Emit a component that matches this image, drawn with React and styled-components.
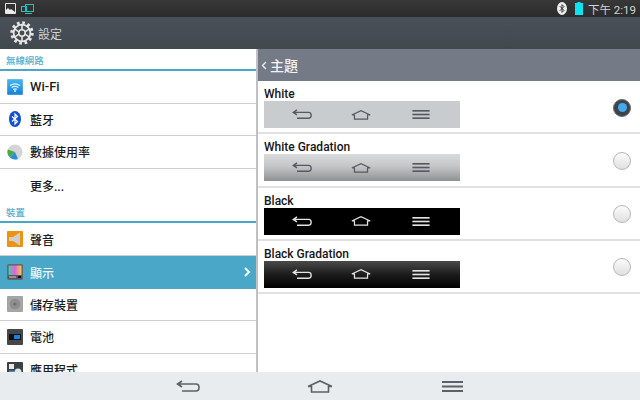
import React from 'react';
import styled, { createGlobalStyle } from 'styled-components';

const GlobalStyle = createGlobalStyle`
  html, body { margin: 0; padding: 0; background: #fff; }
  body { font-family: "Roboto", "Noto Sans CJK TC", sans-serif; }
`;

const Screen = styled.div`
  width: 640px;
  height: 400px;
  display: flex;
  flex-direction: column;
  overflow: hidden;
`;

const StatusBar = styled.div`
  height: 17px;
  flex: none;
  display: flex;
  align-items: center;
  padding: 0 4px 0 5px;
  background: linear-gradient(#383838, #2b2b2b);
`;

const StatusLeft = styled.div`
  display: flex;
  align-items: center;
  gap: 5px;
`;

const StatusRight = styled.div`
  margin-left: auto;
  display: flex;
  align-items: center;
`;

const Clock = styled.span`
  margin-left: 5px;
  font: 11.5px "Roboto", "Noto Sans CJK TC", sans-serif;
  color: #d4d4d4;
  white-space: nowrap;
`;

const TitleBar = styled.div`
  height: 32px;
  flex: none;
  display: flex;
  align-items: center;
  padding-left: 10px;
  gap: 4px;
  background: linear-gradient(#4a5057, #41484e);
`;

const TitleText = styled.span`
  font: 12px "Noto Sans CJK TC", sans-serif;
  color: #d2d4d6;
`;

const Main = styled.div`
  flex: 1;
  min-height: 0;
  display: grid;
  grid-template-columns: 256px 2px 1fr;
`;

const LeftPane = styled.div`
  overflow: hidden;
  background: #fff;
`;

const PaneDivider = styled.div`
  background: linear-gradient(90deg, #c4c5c7, #b9babc);
`;

const SectionHeader = styled.div`
  height: 22px;
  box-sizing: border-box;
  padding: 4.5px 0 0 6px;
  border-bottom: 2px solid #4ba6c8;
  font: 500 9.4px/13px "Noto Sans CJK TC", sans-serif;
  color: #55aecd;
  background: #fff;
`;

const MenuRow = styled.div`
  height: 32.6px;
  box-sizing: border-box;
  display: flex;
  align-items: center;
  padding: 0 5px 0 7px;
  border-bottom: ${p => (p.$active || p.$plain ? '0' : '1px solid #cfcfcf')};
  background: ${p => (p.$active ? '#4aa7c7' : '#fff')};
  color: ${p => (p.$active ? '#eef8fb' : '#1c1c1c')};
  font: 500 12px "Roboto", "Noto Sans CJK TC", sans-serif;
`;

const LatinLabel = styled.span`
  font-size: 13px;
`;

const IconSlot = styled.span`
  width: 16px;
  height: 16px;
  margin-right: 7px;
  flex: none;
  display: block;
  svg { display: block; }
`;

const Chevron = styled.svg`
  margin-left: auto;
  display: block;
`;

const RightPane = styled.div`
  overflow: hidden;
  background: #fff;
`;

const SubHeader = styled.div`
  height: 32px;
  display: flex;
  align-items: center;
  gap: 3px;
  padding-left: 3px;
  background: #747a86;
  color: #f0f1f3;
  font: 500 14px "Noto Sans CJK TC", sans-serif;
`;

const ThemeRow = styled.div`
  height: 53.3px;
  box-sizing: border-box;
  display: flex;
  align-items: flex-start;
  padding: 6px 0 0 6px;
  border-bottom: 2px solid #e0e0e0;
`;

const ThemeBody = styled.div`
  width: 196px;
`;

const ThemeName = styled.div`
  font: 500 12px/14px "Roboto", sans-serif;
  color: #161616;
`;

const PreviewBar = styled.div`
  height: 27px;
  display: grid;
  grid-template-columns: 1fr 1fr 1fr;
  padding: 0 9px 0 8px;
  align-items: center;
  justify-items: center;
  background: ${p => p.$bg};
`;

const Radio = styled.span`
  margin: 11.5px 9px 0 auto;
  width: 18px;
  height: 18px;
  flex: none;
  border-radius: 50%;
  box-sizing: border-box;
  display: flex;
  align-items: center;
  justify-content: center;
  background: ${p => (p.$on ? '#3d444c' : 'linear-gradient(#fbfbfb, #dfe0e2)')};
  border: ${p => (p.$on ? '1px solid #666c72' : '1px solid #b5b6b8')};
`;

const RadioDot = styled.span`
  width: 9px;
  height: 9px;
  border-radius: 50%;
  background: #45a9ee;
`;

const BottomBar = styled.div`
  height: 28px;
  flex: none;
  display: grid;
  grid-template-columns: repeat(3, 132px);
  justify-content: center;
  align-items: center;
  justify-items: center;
  background: #e9ecef;
`;

const BtGlyph = styled.svg`
  display: block;
  margin-right: 8px;
`;

const BackIcon = ({ color, w = 24, h = 13, sw = 1.6 }) => (
  <svg width={w} height={h} viewBox="0 0 24 13" fill="none" stroke={color} strokeWidth={sw}>
    <path d="M6 1 1.5 4 6 7M1.5 4H20q3 0 3 3.5t-3 3.5H6" />
  </svg>
);

const HomeIcon = ({ color, w = 26, h = 13, sw = 1.6 }) => (
  <svg width={w} height={h} viewBox="0 0 26 13" fill="none" stroke={color} strokeWidth={sw}>
    <path d="M1 6.5 13 1l12 5.5M1 6.5h3.5V12h17V6.5H25" />
  </svg>
);

const LinesIcon = ({ color, w = 21, h = 11 }) => (
  <svg width={w} height={h} viewBox="0 0 21 11" fill={color}>
    <rect y="0" width="21" height="2" />
    <rect y="4.5" width="21" height="2" />
    <rect y="9" width="21" height="2" />
  </svg>
);

const GearIcon = () => (
  <svg width="24" height="24" viewBox="0 0 24 24" fill="none" stroke="#e6e6e6">
    <circle cx="12" cy="12" r="10" strokeWidth="3.4" strokeDasharray="2.6 2.63" />
    <circle cx="12" cy="12" r="8.4" strokeWidth="1.8" />
    <circle cx="12" cy="12" r="3.2" strokeWidth="1.6" />
    <path d="M12 8.8V4M12 15.2V20M8.9 13.2 5 15.8M15.1 13.2 19 15.8M8.9 10.8 5 8.2M15.1 10.8 19 8.2" strokeWidth="1.6" />
  </svg>
);

const PictureIcon = () => (
  <svg width="11" height="11" viewBox="0 0 11 11">
    <rect width="11" height="11" rx="1" fill="#e4e4e4" />
    <rect x="1" y="1" width="9" height="9" fill="#333" />
    <path d="M1 10V7l2-2 2 2 1-1 4 3v1z" fill="#eee" />
  </svg>
);

const CastIcon = () => (
  <svg width="13" height="10" viewBox="0 0 13 10" fill="none" stroke="#1cc3c8" strokeWidth="1">
    <rect x="4.5" y=".5" width="8" height="7" />
    <rect x=".5" y="2.5" width="5" height="5" />
    <path d="M4 9.5h7" />
  </svg>
);

const StatusBluetooth = () => (
  <BtGlyph width="10" height="13" viewBox="0 0 10 13">
    <ellipse cx="5" cy="6.5" rx="5" ry="6.5" fill="#efefef" />
    <path d="M2.8 4.2 7 8.4 5 10.4V2.6l2 2-4.2 4.2" fill="none" stroke="#333" strokeWidth="1" />
  </BtGlyph>
);

const StatusBattery = () => (
  <svg width="8" height="13" viewBox="0 0 8 13">
    <rect x="2.5" width="3" height="2" fill="#12e4f4" />
    <rect y="1" width="8" height="12" fill="#0fe2f2" />
  </svg>
);

const WifiIcon = () => (
  <svg width="16" height="16" viewBox="0 0 16 16">
    <defs>
      <linearGradient id="wifiBg" x1="0" y1="0" x2="0" y2="1">
        <stop offset="0" stopColor="#48b6f2" />
        <stop offset="1" stopColor="#1482d8" />
      </linearGradient>
    </defs>
    <rect width="16" height="16" rx="1" fill="url(#wifiBg)" stroke="#d0d4d8" strokeWidth=".5" />
    <path d="M3 6.5q5-3.4 10 0M4.6 8.5q3.4-2.2 6.8 0M6.2 10.4q1.8-1 3.6 0" fill="none" stroke="#d9f2fd" strokeWidth="1.2" />
    <circle cx="8" cy="12" r="1" fill="#d9f2fd" />
  </svg>
);

const BluetoothIcon = () => (
  <svg width="16" height="16" viewBox="0 0 16 16">
    <ellipse cx="8" cy="8" rx="6" ry="8" fill="#0f4fd0" />
    <path d="M5 5.5 10.5 10.5 8 13V3l2.5 2.5L5 10.5" fill="none" stroke="#fff" strokeWidth="1.2" />
  </svg>
);

const DataIcon = () => (
  <svg width="16" height="16" viewBox="0 0 16 16">
    <circle cx="8" cy="8" r="7.5" fill="#d3d5d7" />
    <path d="M8 8 .9 5.5A7.5 7.5 0 0 0 3 13.6z" fill="#4aa84a" />
    <path d="M8 8 3 13.6A7.5 7.5 0 0 0 11 14.9z" fill="#2b8fd8" />
  </svg>
);

const SoundIcon = () => (
  <svg width="16" height="16" viewBox="0 0 16 16">
    <rect width="16" height="16" rx="1" fill="#ee9310" />
    <path d="M2 6h4l7-4.5v13L6 10H2z" fill="#cfd0ce" />
  </svg>
);

const DisplayIcon = () => (
  <svg width="16" height="16" viewBox="0 0 16 16">
    <defs>
      <linearGradient id="dispBg" x1="0" y1="0" x2="1" y2="0">
        <stop offset="0" stopColor="#3fd0b0" />
        <stop offset=".5" stopColor="#e860d8" />
        <stop offset="1" stopColor="#e8d050" />
      </linearGradient>
    </defs>
    <rect width="16" height="16" rx="1" fill="#55595d" stroke="#9a9da0" strokeWidth=".5" />
    <rect x="1.5" y="1.5" width="13" height="9.5" fill="url(#dispBg)" />
    <rect x="2" y="12.5" width="7" height="1" fill="#ccc" />
    <rect x="11" y="12" width="3" height="2" fill="#111" />
  </svg>
);

const StorageIcon = () => (
  <svg width="16" height="16" viewBox="0 0 16 16">
    <rect width="16" height="16" rx="1" fill="#a3a5a5" />
    <circle cx="8" cy="8" r="6" fill="#8d8f8f" stroke="#b5b7b7" strokeWidth=".6" />
    <circle cx="8" cy="8" r="1.6" fill="#6f7171" />
  </svg>
);

const BatteryIcon = () => (
  <svg width="16" height="16" viewBox="0 0 16 16">
    <rect width="16" height="16" rx="1" fill="#454849" />
    <rect x="2" y="5" width="12" height="6" fill="#111" />
    <rect x="7" y="6" width="6" height="4" fill="#1a7fe8" />
  </svg>
);

const AppsIcon = () => (
  <svg width="16" height="16" viewBox="0 0 16 16">
    <rect width="16" height="16" rx="1" fill="#3d4042" />
    <rect x="2" y="2" width="5" height="5" fill="#e8e8e8" />
    <rect x="2" y="8.5" width="5" height="5" fill="#2b8fd8" />
    <circle cx="11" cy="10" r="3.5" fill="#dfe6ea" />
  </svg>
);

const themes = [
  { name: 'White', bg: '#c8ccce', fg: '#565a60', on: true },
  { name: 'White Gradation', bg: 'linear-gradient(#d8dadb, #c4c6c8 45%, #8f9194)', fg: '#565a60' },
  { name: 'Black', bg: '#000', fg: '#e4e4e4' },
  { name: 'Black Gradation', bg: 'linear-gradient(#4a4a4a, #1c1c1c 50%, #000)', fg: '#e4e4e4' },
];

function Row({ icon, label, active, plain }) {
  return (
    <MenuRow $active={active} $plain={plain}>
      <IconSlot>{icon}</IconSlot>
      {label}
      {active && (
        <Chevron width="7" height="10" viewBox="0 0 7 10" fill="none" stroke="#f2fafc" strokeWidth="2">
          <path d="M1 1l4 4-4 4" />
        </Chevron>
      )}
    </MenuRow>
  );
}

export default function App() {
  return (
    <Screen>
      <GlobalStyle />
      <StatusBar>
        <StatusLeft>
          <PictureIcon />
          <CastIcon />
        </StatusLeft>
        <StatusRight>
          <StatusBluetooth />
          <StatusBattery />
          <Clock>下午 2:19</Clock>
        </StatusRight>
      </StatusBar>
      <TitleBar>
        <GearIcon />
        <TitleText>設定</TitleText>
      </TitleBar>
      <Main>
        <LeftPane>
          <SectionHeader>無線網路</SectionHeader>
          <Row icon={<WifiIcon />} label={<LatinLabel>Wi-Fi</LatinLabel>} />
          <Row icon={<BluetoothIcon />} label="藍牙" />
          <Row icon={<DataIcon />} label="數據使用率" />
          <Row label="更多..." plain />
          <SectionHeader>裝置</SectionHeader>
          <Row icon={<SoundIcon />} label="聲音" />
          <Row icon={<DisplayIcon />} label="顯示" active />
          <Row icon={<StorageIcon />} label="儲存裝置" />
          <Row icon={<BatteryIcon />} label="電池" />
          <Row icon={<AppsIcon />} label="應用程式" />
        </LeftPane>
        <PaneDivider />
        <RightPane>
          <SubHeader>
            <svg width="6" height="9" viewBox="0 0 6 9" fill="none" stroke="#f0f1f3" strokeWidth="1.4">
              <path d="M5 1 1.5 4.5 5 8" />
            </svg>
            主題
          </SubHeader>
          {themes.map(t => (
            <ThemeRow key={t.name}>
              <ThemeBody>
                <ThemeName>{t.name}</ThemeName>
                <PreviewBar $bg={t.bg}>
                  <BackIcon color={t.fg} w={20} h={11} />
                  <HomeIcon color={t.fg} w={20} h={10} />
                  <LinesIcon color={t.fg} w={18} h={9} />
                </PreviewBar>
              </ThemeBody>
              <Radio $on={t.on}>{t.on && <RadioDot />}</Radio>
            </ThemeRow>
          ))}
        </RightPane>
      </Main>
      <BottomBar>
        <BackIcon color="#5d6167" />
        <HomeIcon color="#5d6167" />
        <LinesIcon color="#5d6167" />
      </BottomBar>
    </Screen>
  );
}
